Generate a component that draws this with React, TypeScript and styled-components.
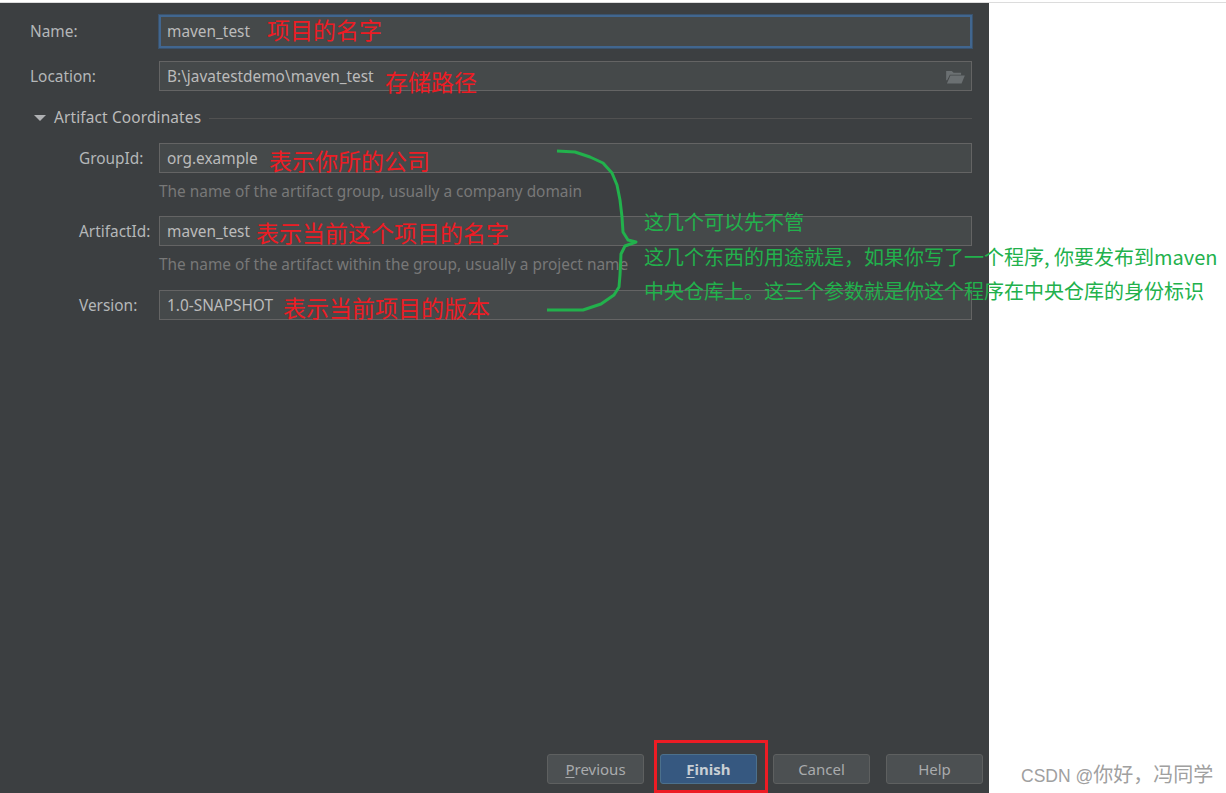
import React from "react";
import styled, { createGlobalStyle } from "styled-components";

const GlobalStyle = createGlobalStyle`
  html, body {
    margin: 0;
    padding: 0;
    background: #fff;
  }
`;

const Page = styled.div`
  position: relative;
  width: 1226px;
  height: 793px;
  overflow: hidden;
  background: #fff;
  font-family: "Noto Sans", "Noto Sans CJK SC", sans-serif;
`;

const TopEdge = styled.div`
  box-sizing: border-box;
  height: 3px;
  border-bottom: 1px solid #dcdcdc;
`;

const Dialog = styled.div`
  display: flex;
  flex-direction: column;
  box-sizing: border-box;
  width: 989px;
  height: 790px;
  padding: 12px 6px 9px 30px;
  background: #3c3f41;
  color: #bbbbbb;
  font-size: 15.4px;
`;

const Form = styled.div`
  display: flex;
  flex-direction: column;
  padding-right: 11px;
`;

const Row = styled.div<{ $labelWidth: number; $top?: number }>`
  display: grid;
  grid-template-columns: ${({ $labelWidth }) => $labelWidth}px 1fr;
  align-items: center;
  margin-top: ${({ $top = 0 }) => $top}px;
`;

const Label = styled.label`
  color: #b4b7b9;
`;

const Field = styled.div<{ $focused?: boolean }>`
  display: flex;
  align-items: center;
  justify-content: space-between;
  box-sizing: border-box;
  height: ${({ $focused }) => ($focused ? 33 : 30)}px;
  padding: 0 ${({ $focused }) => ($focused ? 6 : 7)}px;
  background: #45494a;
  border: ${({ $focused }) => ($focused ? "2px solid #41668f" : "1px solid #646464")};
  box-shadow: ${({ $focused }) => ($focused ? "0 0 0 1px #3a526c" : "none")};
  color: #bbbbbb;
`;

const SectionHeader = styled.div`
  display: flex;
  align-items: center;
  gap: 8px;
  height: 20px;
  margin: 17px 0 15px 4px;
  line-height: 18px;
  letter-spacing: 0.15px;
`;

const Triangle = styled.span`
  width: 0;
  height: 0;
  border-left: 6px solid transparent;
  border-right: 6px solid transparent;
  border-top: 6px solid #afb1b3;
`;

const Divider = styled.span`
  flex: 1;
  height: 1px;
  background: #515151;
`;

const Group = styled.div`
  display: flex;
  flex-direction: column;
  padding-left: 49px;
`;

const Hint = styled.div`
  height: 43px;
  padding: 8px 0 0 80px;
  box-sizing: border-box;
  color: #787878;
  white-space: nowrap;
`;

const ButtonBar = styled.div`
  display: flex;
  justify-content: flex-end;
  gap: 16px;
  margin-top: auto;
`;

const Button = styled.button<{ $primary?: boolean }>`
  box-sizing: border-box;
  width: 97px;
  height: 30px;
  padding: 0;
  border-radius: 3px;
  border: 1px solid ${({ $primary }) => ($primary ? "#4c708c" : "#5e6060")};
  background: ${({ $primary }) => ($primary ? "#365880" : "#4c5052")};
  color: ${({ $primary }) => ($primary ? "#c8ced4" : "#a9abad")};
  font-family: inherit;
  font-size: 15px;
  font-weight: ${({ $primary }) => ($primary ? 700 : 400)};

  u {
    text-underline-offset: 2px;
  }
`;

const Note = styled.span<{ $x: number; $y: number; $color: string; $size: number }>`
  position: absolute;
  left: ${({ $x }) => $x}px;
  top: ${({ $y }) => $y}px;
  color: ${({ $color }) => $color};
  font-family: "Noto Sans CJK SC", sans-serif;
  font-size: ${({ $size }) => $size}px;
  line-height: 1;
  white-space: nowrap;
`;

const BraceSvg = styled.svg`
  position: absolute;
  left: 0;
  top: 0;
  pointer-events: none;
`;

const FolderSvg = styled.svg`
  margin: 2px -1px 0 0;
`;

const FinishMark = styled.div`
  position: absolute;
  left: 654px;
  top: 740px;
  width: 114px;
  height: 53px;
  box-sizing: border-box;
  border: 3px solid #ed1c24;
`;

const Watermark = styled.span`
  position: absolute;
  left: 1021px;
  top: 760px;
  color: #a0a0a0;
  font-family: "Noto Sans CJK SC", sans-serif;
  font-size: 20px;
  line-height: 28px;
  white-space: nowrap;
`;

const WatermarkLatin = styled.span`
  font-family: "Liberation Sans", sans-serif;
  font-size: 17.5px;
`;

const FolderIcon = () => (
  <FolderSvg width="19" height="14" viewBox="0 0 20 15">
    <path d="M0 1h6l2 2h8v2H4L1 11H0z" fill="#6b7072" />
    <path d="M4.5 6H20l-3.5 8.5H.8z" fill="#6b7072" />
  </FolderSvg>
);

const RED = "#ed1c24";
const GREEN = "#22b14c";

const App: React.FC = () => {
  return (
    <Page>
      <GlobalStyle />
      <TopEdge />
      <Dialog>
        <Form>
          <Row $labelWidth={129}>
            <Label>Name:</Label>
            <Field $focused>maven_test</Field>
          </Row>
          <Row $labelWidth={129} $top={13}>
            <Label>Location:</Label>
            <Field>
              B:\javatestdemo\maven_test
              <FolderIcon />
            </Field>
          </Row>
          <SectionHeader>
            <Triangle />
            <span>Artifact Coordinates</span>
            <Divider />
          </SectionHeader>
          <Group>
            <Row $labelWidth={80}>
              <Label>GroupId:</Label>
              <Field>org.example</Field>
            </Row>
            <Hint>The name of the artifact group, usually a company domain</Hint>
            <Row $labelWidth={80}>
              <Label>ArtifactId:</Label>
              <Field>maven_test</Field>
            </Row>
            <Hint>The name of the artifact within the group, usually a project name</Hint>
            <Row $labelWidth={80} $top={1}>
              <Label>Version:</Label>
              <Field>1.0-SNAPSHOT</Field>
            </Row>
          </Group>
        </Form>
        <ButtonBar>
          <Button>
            <u>P</u>revious
          </Button>
          <Button $primary>
            <u>F</u>inish
          </Button>
          <Button>Cancel</Button>
          <Button>Help</Button>
        </ButtonBar>
      </Dialog>

      <Note $x={267} $y={18} $color={RED} $size={23}>项目的名字</Note>
      <Note $x={385} $y={70} $color={RED} $size={23}>存储路径</Note>
      <Note $x={269} $y={149} $color={RED} $size={23}>表示你所的公司</Note>
      <Note $x={256} $y={221} $color={RED} $size={23}>表示当前这个项目的名字</Note>
      <Note $x={283} $y={296} $color={RED} $size={23}>表示当前项目的版本</Note>

      <BraceSvg width="1226" height="793" viewBox="0 0 1226 793">
        <path
          d="M557 151 L575 152 L590 157 L603 163 L612 173 L617 185 L620 200 L622 217 L623 232 L628 240 L636 242 L625 246 L621 254 L620 275 L619 287 L614 295 L601 304 L583 310 L547 310"
          fill="none"
          stroke={GREEN}
          strokeWidth="3"
          strokeLinejoin="round"
        />
      </BraceSvg>

      <Note $x={644} $y={212} $color={GREEN} $size={20}>这几个可以先不管</Note>
      <Note $x={644} $y={247} $color={GREEN} $size={20}>这几个东西的用途就是，如果你写了一个程序, 你要发布到maven</Note>
      <Note $x={644} $y={281} $color={GREEN} $size={20}>中央仓库上。这三个参数就是你这个程序在中央仓库的身份标识</Note>

      <FinishMark />
      <Watermark>
        <WatermarkLatin>CSDN @</WatermarkLatin>你好，冯同学
      </Watermark>
    </Page>
  );
};

export default App;
